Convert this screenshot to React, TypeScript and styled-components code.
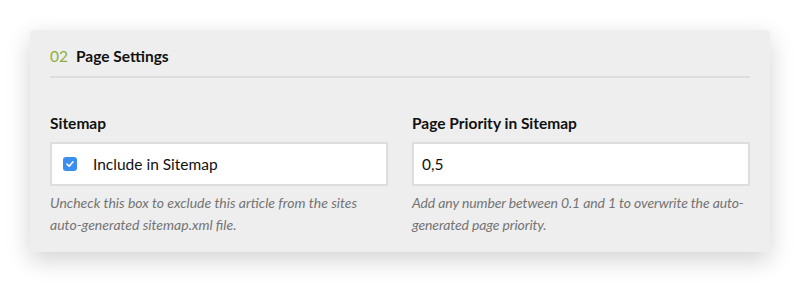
import React from "react";
import styled, { createGlobalStyle } from "styled-components";

const Global = createGlobalStyle`
  html, body { margin: 0; padding: 0; background: #ffffff; }
  body { font-family: Lato, "Open Sans", sans-serif; color: #111; }
  * { box-sizing: border-box; }
`;

const Page = styled.div`
  padding: 30px 30px 31px;
`;

const Panel = styled.section`
  background: #eeeeee;
  border-radius: 4px;
  box-shadow: 0 8px 24px rgba(0, 0, 0, 0.18);
  padding: 0 20px 16px;
`;

const Header = styled.header`
  display: flex;
  align-items: center;
  gap: 8px;
  height: 48px;
  padding-top: 6px;
  border-bottom: 2px solid #dcdcdc;
  font-size: 15.5px;
`;

const Num = styled.span`
  color: #8fae3c;
  font-weight: 400;
`;

const Title = styled.h2`
  margin: 0;
  font-size: 15.5px;
  font-weight: 700;
  color: #111;
`;

const Columns = styled.div`
  display: grid;
  grid-template-columns: 1fr 1fr;
  column-gap: 24px;
  padding-top: 35px;
`;

const Field = styled.div`
  display: flex;
  flex-direction: column;
`;

const Label = styled.label`
  font-size: 15.5px;
  font-weight: 700;
  line-height: 20px;
  margin-bottom: 9px;
`;

const Box = styled.div<{ $pad: number }>`
  height: 44px;
  background: #fff;
  border: 2px solid #dddddd;
  display: flex;
  align-items: center;
  padding: 0 ${(p) => p.$pad}px;
  gap: 16px;
  font-size: 15.5px;
`;

const Check = styled.span`
  width: 14px;
  height: 14px;
  border-radius: 3px;
  background: #3a8ef0;
  display: inline-flex;
  align-items: center;
  justify-content: center;
`;

const Help = styled.p<{ $tight?: boolean }>`
  margin: 6px 0 0;
  font-size: 14px;
  line-height: 22px;
  font-style: italic;
  letter-spacing: ${(p) => (p.$tight ? "-0.12px" : "0")};
  color: #747474;
`;

export default function App() {
  return (
    <>
      <Global />
      <Page>
        <Panel>
          <Header>
            <Num>02</Num>
            <Title>Page Settings</Title>
          </Header>
          <Columns>
            <Field>
              <Label>Sitemap</Label>
              <Box $pad={11}>
                <Check>
                  <svg width="10" height="10" viewBox="0 0 10 10">
                    <path d="M2 5.2 L4.2 7.2 L8 2.8" fill="none" stroke="#fff" strokeWidth="1.6" strokeLinecap="round" strokeLinejoin="round" />
                  </svg>
                </Check>
                <span>Include in Sitemap</span>
              </Box>
              <Help>Uncheck this box to exclude this article from the sites auto-generated sitemap.xml file.</Help>
            </Field>
            <Field>
              <Label>Page Priority in Sitemap</Label>
              <Box $pad={8}>
                <span>0,5</span>
              </Box>
              <Help $tight>Add any number between 0.1 and 1 to overwrite the auto-generated page priority.</Help>
            </Field>
          </Columns>
        </Panel>
      </Page>
    </>
  );
}
